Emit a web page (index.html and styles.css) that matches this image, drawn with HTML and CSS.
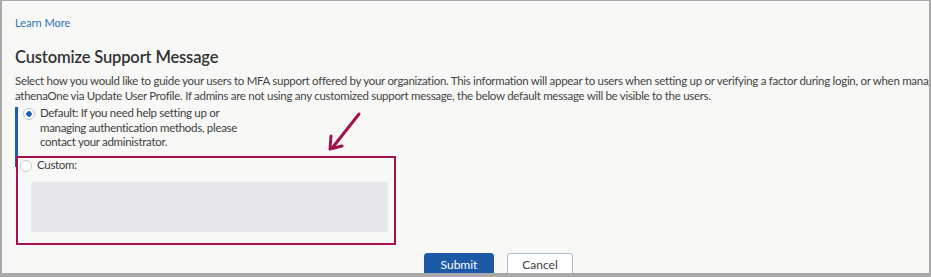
FILE: index.html
```html
<!DOCTYPE html>
<html lang="en">
<head>
    <meta charset="UTF-8">
    <meta name="viewport" content="width=device-width, initial-scale=1.0">
    <title>Customize Support Message</title>
    <link rel="stylesheet" href="styles.css">
</head>
<body>
    <div class="frame">
        <a href="#" class="learn-more">Learn More</a>

        <h2 class="title">Customize Support Message</h2>
        <p class="intro">Select how you would like to guide your users to MFA support offered by your organization. This information will appear to users when setting up or verifying a factor during login, or when managing their factors in<br>athenaOne via Update User Profile. If admins are not using any customized support message, the below default message will be visible to the users.</p>

        <div class="options">
            <div class="option-bar"></div>
            <div class="option-list">
                <label class="option">
                    <span class="radio checked"></span>
                    <span class="option-text">Default: If you need help setting up or managing authentication methods, please contact your administrator.</span>
                </label>
                <div class="highlight">
                    <label class="option">
                        <span class="radio"></span>
                        <span class="option-text">Custom:</span>
                    </label>
                    <div class="custom-box"></div>
                </div>
            </div>

            <!-- annotation arrow -->
            <svg class="arrow" width="40" height="44" viewBox="0 0 40 44">
                <line x1="34" y1="4" x2="8" y2="37" stroke="#a3124f" stroke-width="3" stroke-linecap="round"/>
                <polyline points="6,26 5,39 17,36" fill="none" stroke="#a3124f" stroke-width="3" stroke-linecap="round" stroke-linejoin="round"/>
            </svg>
        </div>

        <div class="actions">
            <button class="btn btn-primary">Submit</button>
            <button class="btn btn-secondary">Cancel</button>
        </div>
    </div>
</body>
</html>
```

FILE: styles.css
```css
body {
    margin: 0;
    padding: 0;
    font-family: "Source Sans Pro", Lato, "Open Sans", sans-serif;
    color: #3e3e3e;
    background-color: #a9a9a9;
}

.frame {
    box-sizing: border-box;
    width: 927px;
    height: 272px;
    margin: 1px 0 0 2px;
    padding: 15px 0 0 13px;
    background-color: #f8f8f6;
    overflow: hidden;
}

.learn-more {
    display: block;
    font-size: 11px;
    color: #2f72b8;
    text-decoration: none;
}

.title {
    margin: 18px 0 6px 0;
    font-size: 16.5px;
    font-weight: 600;
    color: #333;
    letter-spacing: -0.15px;
}

.intro {
    margin: 0;
    font-size: 11.5px;
    line-height: 15px;
    white-space: nowrap;
    letter-spacing: -0.29px;
    color: #444;
}

.options {
    position: relative;
    display: flex;
    margin-top: 3px;
}

.option-bar {
    width: 3px;
    height: 60px;
    margin-top: 1px;
    background-color: #1f5fb0;
}

.option-list {
    display: flex;
    flex-direction: column;
}

.option {
    display: flex;
    align-items: flex-start;
    gap: 5px;
    padding-left: 5px;
    font-size: 11.5px;
    line-height: 14.5px;
    letter-spacing: -0.3px;
    color: #3e3e3e;
}

.option-text {
    width: 205px;
}

.radio {
    box-sizing: border-box;
    width: 12px;
    height: 12px;
    margin-top: 2px;
    border: 1px solid #c9c9c9;
    border-radius: 50%;
    background-color: #fff;
    flex-shrink: 0;
}

.radio.checked {
    border-color: #b6c6dc;
    background: radial-gradient(circle, #1f5fb0 0 2.5px, #fff 3px);
}

.highlight {
    box-sizing: border-box;
    width: 380px;
    height: 89px;
    margin: 6px 0 0 -2px;
    padding: 0 6px 0 0;
    border: 2px solid #a3124f;
}

.highlight .option {
    margin-left: -3px;
    width: 150px;
}

.custom-box {
    height: 50px;
    margin: 10px 0 0 13px;
    background-color: #e8e7e9;
    border-radius: 2px;
}

.arrow {
    position: absolute;
    left: 310px;
    top: 4px;
}

.actions {
    display: flex;
    gap: 13px;
    margin: 8px 0 0 409px;
}

.btn {
    box-sizing: border-box;
    height: 24px;
    font-family: inherit;
    font-size: 12px;
    border-radius: 3px;
    cursor: pointer;
}

.btn-primary {
    width: 70px;
    background-color: #1c5aa8;
    color: #fff;
    border: 1px solid #1c5aa8;
}

.btn-secondary {
    width: 66px;
    background-color: #fff;
    color: #3e3e3e;
    border: 1px solid #a8bad2;
}
```
